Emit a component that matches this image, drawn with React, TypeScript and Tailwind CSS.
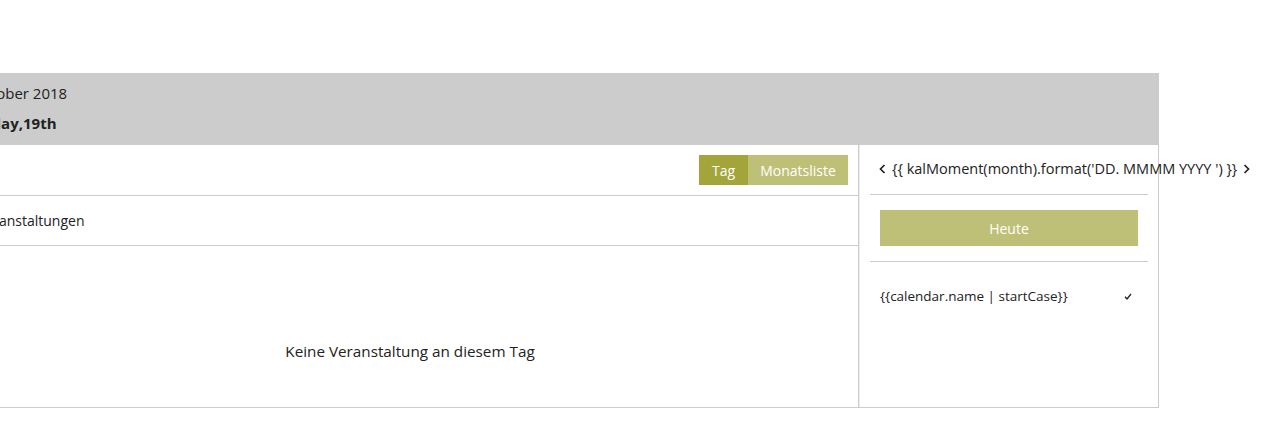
import React from "react";

const font = { fontFamily: '"Open Sans", "Noto Sans", sans-serif' };

const Chevron: React.FC<{ dir: "left" | "right" }> = ({ dir }) => (
  <svg width="9" height="12" viewBox="0 0 9 12" className="shrink-0">
    <path
      d={dir === "left" ? "M6.5 2 L2.5 6 L6.5 10" : "M2.5 2 L6.5 6 L2.5 10"}
      fill="none"
      stroke="#222"
      strokeWidth="1.7"
    />
  </svg>
);

export default function App() {
  return (
    <div className="min-h-[437px] bg-white text-[#222]" style={font}>
      <div className="pt-[73px] ml-[-38px] w-[1197px]">
        {/* header */}
        <div className="h-[72px] bg-[#cccccc] pl-[10px] pt-[8px]">
          <div className="text-[15px] leading-[24px]">October 2018</div>
          <div className="mt-[6px] text-[15px] leading-[24px] font-bold">Friday,19th</div>
        </div>

        {/* body */}
        <div className="flex h-[263px] border-b border-[#cccccc]">
          <div className="w-[897px] flex flex-col border-r border-[#cccccc]">
            <div className="h-[51px] flex items-center justify-end pr-[10px] border-b border-[#cccccc]">
              <div className="flex text-[14px] text-white">
                <button className="h-[30px] w-[49px] bg-[#a3a53b]">Tag</button>
                <button className="h-[30px] w-[100px] bg-[#bfc077]">Monatsliste</button>
              </div>
            </div>
            <div className="h-[50px] flex items-center pl-[15px] text-[14px] border-b border-[#cccccc]">
              Veranstaltungen
            </div>
            <div className="flex-1 flex items-end justify-center pb-[44px] text-[15.25px]">
              Keine Veranstaltung an diesem Tag
            </div>
          </div>

          <div className="w-[300px] border-l border-[#eeeeee] border-r border-r-[#cccccc] px-[10px]">
            <div className="h-[50px] flex items-center gap-[5px] pl-[8px] pb-[1px] border-b border-[#cccccc] whitespace-nowrap text-[14.5px]">
              <Chevron dir="left" />
              <span>{"{{ kalMoment(month).format('DD. MMMM YYYY ') }}"}</span>
              <Chevron dir="right" />
            </div>
            <div className="py-[15px] border-b border-[#cccccc] px-[10px]">
              <button className="w-full h-[36px] bg-[#bfc077] text-white text-[14px]">Heute</button>
            </div>
            <div className="flex items-center justify-between pl-[10px] pr-[16px] pt-[24px] text-[13.5px]">
              <span>{"{{calendar.name | startCase}}"}</span>
              <svg width="8" height="7" viewBox="0 0 8 7">
                <path d="M1 3.8 L3 6 L7 1" fill="none" stroke="#222" strokeWidth="1.3" />
              </svg>
            </div>
          </div>
        </div>
      </div>
    </div>
  );
}
